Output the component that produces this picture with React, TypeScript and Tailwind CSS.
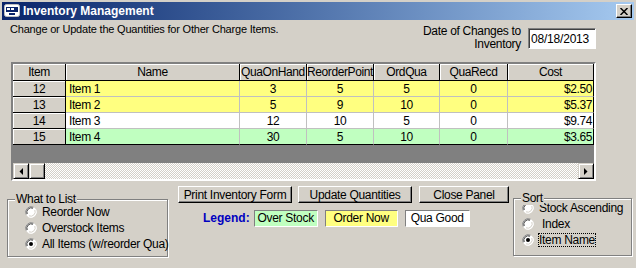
import React from 'react'

type Row = { id: number; name: string; onHand: number; reorder: number; ord: number; recd: number; cost: string; bg: string }

const rows: Row[] = [
	{ id: 12, name: 'Item 1', onHand: 3, reorder: 5, ord: 5, recd: 0, cost: '$2.50', bg: 'bg-[#ffff80]' },
	{ id: 13, name: 'Item 2', onHand: 5, reorder: 9, ord: 10, recd: 0, cost: '$5.37', bg: 'bg-[#ffff80]' },
	{ id: 14, name: 'Item 3', onHand: 12, reorder: 10, ord: 5, recd: 0, cost: '$9.74', bg: 'bg-white' },
	{ id: 15, name: 'Item 4', onHand: 30, reorder: 5, ord: 10, recd: 0, cost: '$3.65', bg: 'bg-[#c0ffc0]' },
]

const headers = ['Item', 'Name', 'QuaOnHand', 'ReorderPoint', 'OrdQua', 'QuaRecd', 'Cost']

function Radio({ checked }: { checked?: boolean }) {
	return (
		<svg width="12" height="12" viewBox="0 0 12 12" className="shrink-0">
			<circle cx="6" cy="6" r="5.5" fill="#ffffff" />
			<path d="M1.2 8.5 A5.5 5.5 0 0 1 8.5 1.2" stroke="#808080" strokeWidth="1" fill="none" />
			<path d="M2.2 8 A4.4 4.4 0 0 1 8 2.2" stroke="#404040" strokeWidth="1" fill="none" />
			<path d="M10.8 3.5 A5.5 5.5 0 0 1 3.5 10.8" stroke="#ffffff" strokeWidth="1" fill="none" />
			<path d="M9.8 4 A4.4 4.4 0 0 1 4 9.8" stroke="#d4d0c8" strokeWidth="1" fill="none" />
			{checked && <circle cx="6" cy="6" r="2" fill="#000000" />}
		</svg>
	)
}

function Button({ label, w }: { label: string; w: string }) {
	return (
		<div
			className={`${w} h-[17px] flex items-center justify-center border border-t-white border-l-white border-r-black border-b-black shadow-[inset_-1px_-1px_0_#808080] text-[12px] tracking-[-0.3px] leading-none whitespace-nowrap`}
		>
			{label}
		</div>
	)
}

function Arrow({ dir }: { dir: 'left' | 'right' }) {
	return (
		<div className="w-[16px] h-[16px] flex items-center justify-center bg-[#d4d0c8] border border-t-[#d4d0c8] border-l-[#d4d0c8] border-r-black border-b-black shadow-[inset_1px_1px_0_white,inset_-1px_-1px_0_#808080]">
			<svg width="4" height="7" viewBox="0 0 4 7">
				{dir === 'left' ? <polygon points="4,0 4,7 0.5,3.5" fill="black" /> : <polygon points="0,0 0,7 3.5,3.5" fill="black" />}
			</svg>
		</div>
	)
}

export default function App() {
	return (
		<div className="w-[636px] h-[268px] bg-[#d4d0c8] p-[2px] flex flex-col text-black overflow-hidden font-['Liberation_Sans',Arial,sans-serif] text-[11px]">
			{/* title bar */}
			<div className="h-[18px] flex items-center bg-gradient-to-r from-[#0a246a] to-[#a6caf0] pl-[2px] pr-[2px]">
				<svg width="16" height="14" viewBox="0 0 16 14" className="shrink-0">
					<rect x="0.5" y="0.5" width="15" height="12" rx="2" fill="#ffffff" stroke="#c0c0c0" />
					<rect x="2" y="3" width="12" height="5" fill="#0a246a" />
					<rect x="3" y="4" width="3" height="2" fill="#ffffff" />
					<rect x="7" y="4" width="3" height="2" fill="#ffffff" />
					<rect x="5" y="9" width="6" height="2" fill="#0a246a" />
				</svg>
				<span className="ml-[3px] text-white font-bold text-[12px] leading-none">Inventory Management</span>
				<div className="ml-auto w-[16px] h-[14px] flex items-center justify-center bg-[#d4d0c8] border border-t-white border-l-white border-r-black border-b-black shadow-[inset_-1px_-1px_0_#808080]">
					<svg width="8" height="7" viewBox="0 0 8 7">
						<path d="M0.5 0 L7.5 7 M7.5 0 L0.5 7" stroke="black" strokeWidth="1.5" />
					</svg>
				</div>
			</div>

			{/* top row */}
			<div className="h-[42px] flex justify-between">
				<div className="pl-[8px] pt-[2px] leading-[14px] tracking-[-0.2px]">Change or Update the Quantities for Other Charge Items.</div>
				<div className="flex items-start pr-[38px] pt-[5px]">
					<div className="text-right leading-[13px] text-[12px] tracking-[-0.3px]">
						Date of Changes to
						<br />
						Inventory
					</div>
					<div className="ml-[7px] mt-[3px] w-[68px] h-[21px] flex items-center pl-[2px] bg-white border border-t-[#808080] border-l-[#808080] border-r-white border-b-white shadow-[inset_1px_1px_0_#404040] text-[12px] tracking-[-0.2px]">
						08/18/2013
					</div>
				</div>
			</div>

			{/* grid */}
			<div className="ml-[9px] w-[585px] border-2 border-t-[#808080] border-l-[#808080] border-r-white border-b-white bg-[#808080] text-[12px] tracking-[-0.4px]">
				<div className="grid grid-cols-[53px_174px_67px_67px_66px_68px_86px]">
					{headers.map((h) => (
						<div
							key={h}
							className="h-[17px] flex items-center justify-center bg-[#d4d0c8] border-r border-b border-black shadow-[inset_1px_1px_0_white] leading-none whitespace-nowrap overflow-hidden"
						>
							{h}
						</div>
					))}
					{rows.map((r, i) => {
						const last = i === rows.length - 1
						const cell = `h-[16px] flex items-center leading-none border-r border-b ${r.bg} ${last ? 'border-b-black' : 'border-b-[#c0c0c0]'}`
						return (
							<React.Fragment key={r.id}>
								<div className="h-[16px] flex items-center justify-center leading-none bg-[#d4d0c8] border-r border-b border-black shadow-[inset_1px_1px_0_white]">
									{r.id}
								</div>
								<div className={`${cell} pl-[3px] border-r-[#c0c0c0]`}>{r.name}</div>
								<div className={`${cell} justify-center border-r-[#c0c0c0]`}>{r.onHand}</div>
								<div className={`${cell} justify-center border-r-[#c0c0c0]`}>{r.reorder}</div>
								<div className={`${cell} justify-center border-r-[#c0c0c0]`}>{r.ord}</div>
								<div className={`${cell} justify-center border-r-[#c0c0c0]`}>{r.recd}</div>
								<div className={`${cell} justify-end pr-[1px] border-r-black`}>{r.cost}</div>
							</React.Fragment>
						)
					})}
				</div>
				<div className="h-[18px]" />
				<div className="h-[16px] flex bg-[repeating-conic-gradient(#d4d0c8_0_25%,#ffffff_0_50%)] bg-[length:2px_2px]">
					<Arrow dir="left" />
					<div className="w-[16px] h-[16px] bg-[#d4d0c8] border border-t-[#d4d0c8] border-l-[#d4d0c8] border-r-black border-b-black shadow-[inset_1px_1px_0_white,inset_-1px_-1px_0_#808080]" />
					<div className="flex-1" />
					<Arrow dir="right" />
				</div>
			</div>

			{/* bottom */}
			<div className="flex items-start text-[12px] tracking-[-0.3px] whitespace-nowrap">
				<div className="relative ml-[5px] mt-[18px] w-[161px] h-[58px] border border-[#808080] shadow-[inset_1px_1px_0_white,1px_1px_0_white]">
					<span className="absolute -top-[8px] left-[7px] px-[1px] bg-[#d4d0c8] leading-[14px]">What to List</span>
					<div className="flex flex-col gap-[4px] pl-[17px] pt-[6px]">
						<label className="flex items-center gap-[5px] leading-[12px]"><Radio />Reorder Now</label>
						<label className="flex items-center gap-[5px] leading-[12px]"><Radio />Overstock Items</label>
						<label className="flex items-center gap-[5px] leading-[12px]"><Radio checked />All Items (w/reorder Qua)</label>
					</div>
				</div>

				<div className="ml-[10px] mt-[5px] flex flex-col">
					<div className="flex">
						<Button label="Print Inventory Form" w="w-[114px]" />
						<div className="ml-[6px]"><Button label="Update Quantities" w="w-[114px]" /></div>
						<div className="ml-[7px]"><Button label="Close Panel" w="w-[90px]" /></div>
					</div>
					<div className="flex items-center mt-[6px]">
						<span className="ml-[25px] font-bold text-[#0000c0] tracking-normal">Legend:</span>
						<div className="ml-[4px] w-[64px] h-[17px] flex items-center justify-center bg-[#c0ffc0] border border-t-[#808080] border-l-[#808080] border-r-white border-b-white leading-none">Over Stock</div>
						<div className="ml-[7px] w-[73px] h-[17px] flex items-center justify-center bg-[#ffff80] border border-t-[#808080] border-l-[#808080] border-r-white border-b-white leading-none">Order Now</div>
						<div className="ml-[7px] w-[65px] h-[17px] flex items-center justify-center bg-white border border-t-[#808080] border-l-[#808080] border-r-white border-b-white leading-none">Qua Good</div>
					</div>
				</div>

				<div className="relative ml-auto mr-[2px] mt-[17px] w-[119px] h-[58px] border border-[#808080] shadow-[inset_1px_1px_0_white,1px_1px_0_white]">
					<span className="absolute -top-[8px] left-[7px] px-[1px] bg-[#d4d0c8] leading-[14px]">Sort</span>
					<div className="flex flex-col gap-[4px] pl-[8px] pt-[3px]">
						<label className="flex items-center gap-[5px] leading-[12px]"><Radio />Stock Ascending</label>
						<label className="flex items-center gap-[5px] leading-[12px]"><Radio /><span className="pl-[3px]">Index</span></label>
						<label className="flex items-center gap-[5px] leading-[12px]"><Radio checked /><span className="outline-1 outline-dotted outline-black">Item Name</span></label>
					</div>
				</div>
			</div>
		</div>
	)
}
